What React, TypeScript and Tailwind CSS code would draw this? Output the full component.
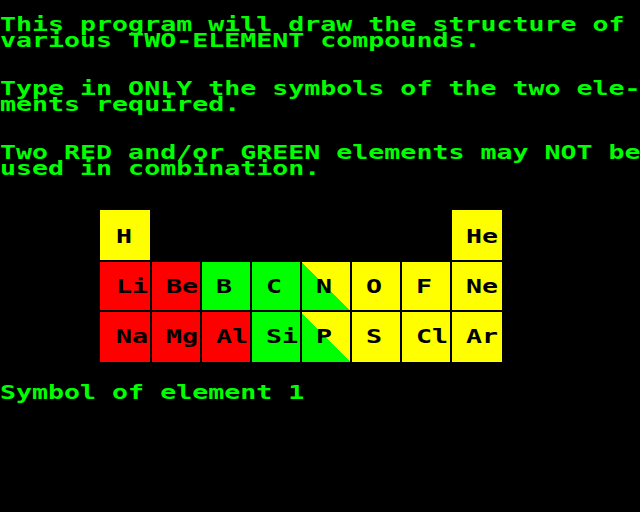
import React from "react";

const font = "font-['DejaVu_Sans_Mono',monospace] font-bold text-[19px]";

function Line({ text }: { text: string }) {
  return (
    <div className={`h-4 leading-4 whitespace-pre text-[#00ff00] ${font}`}>
      <span className="inline-block origin-left scale-x-[1.4]">{text}</span>
    </div>
  );
}

type C = { s: string; bg: string; col: number; row: number };

const cells: C[] = [
  { s: "H", bg: "bg-[#ffff00]", col: 0, row: 0 },
  { s: "He", bg: "bg-[#ffff00]", col: 7, row: 0 },
  { s: "Li", bg: "bg-[#ff0000]", col: 0, row: 1 },
  { s: "Be", bg: "bg-[#ff0000]", col: 1, row: 1 },
  { s: "B", bg: "bg-[#00ff00]", col: 2, row: 1 },
  { s: "C", bg: "bg-[#00ff00]", col: 3, row: 1 },
  { s: "N", bg: "bg-[linear-gradient(45deg,#00ff00_50%,#ffff00_50%)]", col: 4, row: 1 },
  { s: "O", bg: "bg-[#ffff00]", col: 5, row: 1 },
  { s: "F", bg: "bg-[#ffff00]", col: 6, row: 1 },
  { s: "Ne", bg: "bg-[#ffff00]", col: 7, row: 1 },
  { s: "Na", bg: "bg-[#ff0000]", col: 0, row: 2 },
  { s: "Mg", bg: "bg-[#ff0000]", col: 1, row: 2 },
  { s: "Al", bg: "bg-[#ff0000]", col: 2, row: 2 },
  { s: "Si", bg: "bg-[#00ff00]", col: 3, row: 2 },
  { s: "P", bg: "bg-[linear-gradient(45deg,#00ff00_50%,#ffff00_50%)]", col: 4, row: 2 },
  { s: "S", bg: "bg-[#ffff00]", col: 5, row: 2 },
  { s: "Cl", bg: "bg-[#ffff00]", col: 6, row: 2 },
  { s: "Ar", bg: "bg-[#ffff00]", col: 7, row: 2 },
];

const colStart = [
  "col-start-1", "col-start-2", "col-start-3", "col-start-4",
  "col-start-5", "col-start-6", "col-start-7", "col-start-8",
];
const rowStart = ["row-start-1", "row-start-2", "row-start-3"];
const padTop = ["pt-[18px]", "pt-[16px]", "pt-[16px]"];

function Cell({ c }: { c: C }) {
  const pl = c.col === 0 ? "pl-[16px]" : "pl-[14px]";
  return (
    <div className={`${c.bg} ${colStart[c.col]} ${rowStart[c.row]} ${pl} ${padTop[c.row]}`}>
      <div className={`h-4 leading-4 whitespace-pre text-black ${font}`}>
        <span className="inline-block origin-left scale-x-[1.4]">{c.s}</span>
      </div>
    </div>
  );
}

export default function App() {
  return (
    <div className="w-[640px] h-[512px] bg-black overflow-hidden flex flex-col pt-4">
      <Line text="This program will draw the structure of" />
      <Line text="various TWO-ELEMENT compounds." />
      <Line text="" />
      <Line text="" />
      <Line text="Type in ONLY the symbols of the two ele-" />
      <Line text="ments required." />
      <Line text="" />
      <Line text="" />
      <Line text="Two RED and/or GREEN elements may NOT be" />
      <Line text="used in combination." />
      <div className="ml-[100px] mt-[34px] grid grid-cols-[50px_repeat(6,48px)_50px] grid-rows-[50px_48px_50px] gap-[2px] w-[402px]">
        {cells.map((c) => (
          <Cell key={c.s} c={c} />
        ))}
      </div>
      <div className="mt-[22px]">
        <Line text="Symbol of element 1" />
      </div>
    </div>
  );
}
